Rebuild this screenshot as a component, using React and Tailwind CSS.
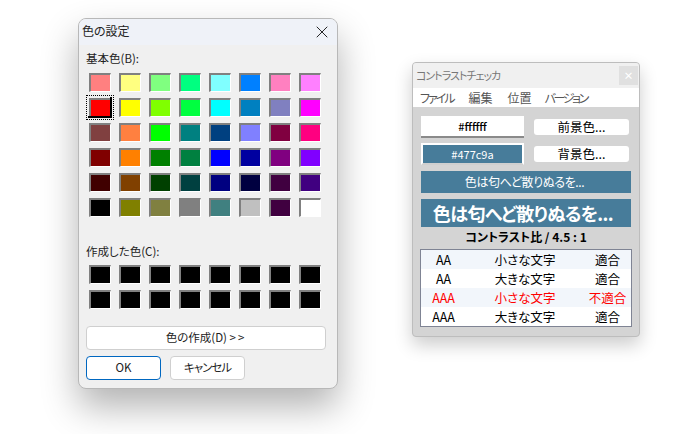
import React from 'react';
import { X } from 'lucide-react';

const basicColors = [
  '#ff8080', '#ffff80', '#80ff80', '#00ff80', '#80ffff', '#0080ff', '#ff80c0', '#ff80ff',
  '#ff0000', '#ffff00', '#80ff00', '#00ff40', '#00ffff', '#0080c0', '#8080c0', '#ff00ff',
  '#804040', '#ff8040', '#00ff00', '#008080', '#004080', '#8080ff', '#800040', '#ff0080',
  '#800000', '#ff8000', '#008000', '#008040', '#0000ff', '#0000a0', '#800080', '#8000ff',
  '#400000', '#804000', '#004000', '#004040', '#000080', '#000040', '#400040', '#400080',
  '#000000', '#808000', '#808040', '#808080', '#408080', '#c0c0c0', '#400040', '#ffffff',
];

const results = [
  { level: 'AA', size: '小さな文字', verdict: '適合', stripe: true },
  { level: 'AA', size: '大きな文字', verdict: '適合' },
  { level: 'AAA', size: '小さな文字', verdict: '不適合', stripe: true, fail: true },
  { level: 'AAA', size: '大きな文字', verdict: '適合' },
];

function Swatch({ color, selected }) {
  return (
    <div className="relative h-[19px] w-[22px]">
      <div
        className="h-full w-full border-t-2 border-l-2 border-r border-b border-t-[#808080] border-l-[#808080] border-r-white border-b-white"
        style={{ backgroundColor: color }}
      />
      {selected && (
        <div className="absolute -inset-x-[3px] -inset-y-[3px] border border-dotted border-black p-[1px]">
          <div className="h-full w-full border-r-2 border-b-2 border-black" />
        </div>
      )}
    </div>
  );
}

function ColorDialog() {
  return (
    <div className="h-[371px] w-[260px] shrink-0 overflow-hidden rounded-lg border border-[#b8b8b8] bg-[#f0f0f0] shadow-[0_18px_36px_rgba(0,0,0,0.3)]">
      <div className="flex h-[26px] items-center justify-between bg-[#eff2f8] pb-[3px] pl-[3px] pr-[5px] text-[12px] text-[#222]">
        <span>色の設定</span>
        <X size={20} strokeWidth={1.1} className="mt-[3px] text-[#111]" />
      </div>
      <div className="px-[7px]">
        <p className="mt-[4px] text-[11.5px] leading-[18px] text-[#222]">基本色(B):</p>
        <div className="mt-[6px] ml-[3px] grid grid-cols-[repeat(8,22px)] gap-x-[8px] gap-y-[6px]">
          {basicColors.map((c, i) => (
            <Swatch key={i} color={c} selected={i === 8} />
          ))}
        </div>
        <p className="mt-[25px] text-[11.5px] leading-[18px] text-[#222]">作成した色(C):</p>
        <div className="mt-[5px] ml-[3px] grid grid-cols-[repeat(8,22px)] gap-x-[8px] gap-y-[6px]">
          {Array.from({ length: 16 }).map((_, i) => (
            <Swatch key={i} color="#000000" />
          ))}
        </div>
        <button className="mt-[17px] block h-[24px] w-[240px] rounded-[4px] border border-[#cfcfcf] bg-white text-[11.5px] text-[#222]">
          色の作成(D) <span className="tracking-[2px]">&gt;&gt;</span>
        </button>
        <div className="mt-[6px] flex gap-[9px]">
          <button className="h-[24px] w-[75px] rounded-[4px] border border-[#0067c0] bg-white text-[11.5px] text-[#222]">
            OK
          </button>
          <button className="h-[24px] w-[75px] rounded-[4px] border border-[#cfcfcf] bg-white text-[11.5px] tracking-[-1px] text-[#222]">
            キャンセル
          </button>
        </div>
      </div>
    </div>
  );
}

function ContrastChecker() {
  return (
    <div className="mt-[44px] h-[275px] w-[228px] shrink-0 overflow-hidden rounded-[4px] border border-[#bdbdbd] bg-[#d4d4d4] shadow-[0_8px_18px_rgba(0,0,0,0.2)]">
      <div className="flex h-[25px] items-center justify-between bg-[#f0f0f0] pl-[3px] pr-[1px] text-[11px] text-[#777]">
        <span className="tracking-[-1px]">コントラストチェッカ</span>
        <div className="flex h-[19px] w-[19px] items-center justify-center bg-[#e0e0e0] text-[10px] leading-none font-bold text-white">×</div>
      </div>
      <div className="flex h-[19px] items-center gap-[15px] bg-white pl-[7px] text-[12px] text-[#555]">
        <span className="tracking-[-2px]">ファイル</span>
        <span>編集</span>
        <span>位置</span>
        <span className="-ml-[2px] tracking-[-2.4px]">バージョン</span>
      </div>
      <div className="px-[8px] pt-[9px]">
        <div className="flex items-center gap-[10px]">
          <div className="flex h-[22px] w-[103px] items-center justify-center border-b-2 border-b-[#8a8a8a] bg-white text-[11px] font-medium text-black">
            #ffffff
          </div>
          <button className="h-[16px] w-[95px] rounded-[3px] bg-white text-[12.5px] leading-[16px] text-black">前景色...</button>
        </div>
        <div className="mt-[5px] flex items-center gap-[10px]">
          <div className="flex h-[22px] w-[103px] items-center justify-center border-2 border-white border-b-[#cfcfcf] bg-[#477c9a] text-[11px] text-white">
            #477c9a
          </div>
          <button className="h-[16px] w-[95px] rounded-[3px] bg-white text-[12.5px] leading-[16px] text-black">背景色...</button>
        </div>
        <div className="mt-[6px] flex h-[22px] w-[210px] items-center justify-center bg-[#477c9a] pr-[3px] text-[12px] tracking-[-0.4px] text-white">
          色は匂へど散りぬるを...
        </div>
        <div className="mt-[6px] flex h-[28px] w-[210px] items-center justify-center bg-[#477c9a] pr-[6px] text-[18px] font-bold tracking-[-0.6px] text-white">
          色は匂へど散りぬるを...
        </div>
        <p className="text-center text-[12px] leading-[20px] font-bold text-black">コントラスト比 / 4.5 : 1</p>
        <div className="-ml-[1px] mt-[2px] w-[212px] border border-[#7f8494] bg-white text-[12.5px] leading-[19px]">
          {results.map((r, i) => (
            <div key={i} className={`grid h-[19px] grid-cols-[45px_118px_47px] text-center ${r.stripe ? 'bg-[#f2f6fb]' : ''} ${r.fail ? 'text-[#ff0000]' : 'text-black'}`}>
              <span>{r.level}</span>
              <span>{r.size}</span>
              <span>{r.verdict}</span>
            </div>
          ))}
        </div>
      </div>
    </div>
  );
}

export default function App() {
  return (
    <div className="flex h-[434px] w-[700px] items-start gap-[74px] overflow-hidden bg-white pl-[78px] pt-[18px] font-['Noto_Sans_CJK_JP','Noto_Sans',sans-serif] [font-feature-settings:'palt']">
      <ColorDialog />
      <ContrastChecker />
    </div>
  );
}
